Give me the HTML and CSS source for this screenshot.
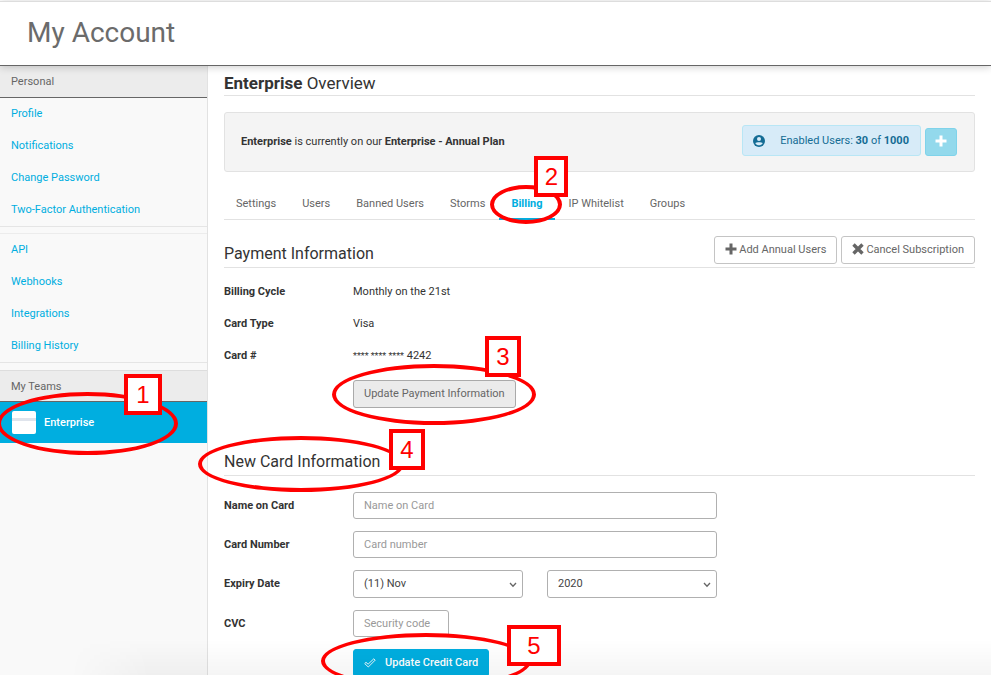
FILE: index.html
```html
<!DOCTYPE html>
<html lang="en">
<head>
<meta charset="utf-8">
<title>My Account</title>
<link rel="stylesheet" href="styles.css">
</head>
<body>
<header class="top"><h1>My Account</h1></header>
<div class="layout">
  <nav class="side" aria-label="Account">
    <h2 class="side-title">Personal</h2>
    <ul class="links">
      <li><a href="#">Profile</a></li>
      <li><a href="#">Notifications</a></li>
      <li><a href="#">Change Password</a></li>
      <li><a href="#">Two-Factor Authentication</a></li>
    </ul>
    <ul class="links">
      <li><a href="#">API</a></li>
      <li><a href="#">Webhooks</a></li>
      <li><a href="#">Integrations</a></li>
      <li><a href="#">Billing History</a></li>
    </ul>
    <h2 class="side-title teams">My Teams</h2>
    <div class="marked">
      <a class="team" href="#"><span class="avatar"></span>Enterprise</a>
      <span class="ring ring-1"></span><span class="tag tag-1">1</span>
    </div>
  </nav>
  <main class="main">
    <h2 class="heading overview"><span><b>Enterprise</b> Overview</span></h2>
    <section class="plan">
      <p><b>Enterprise</b> is currently on our <b>Enterprise - Annual Plan</b></p>
      <div class="seats">
        <span class="enabled">
          <svg width="12" height="12" viewBox="0 0 12 12"><circle cx="6" cy="6" r="6" fill="#146c94"/><circle cx="6" cy="4" r="2" fill="#d7ebf8"/><path d="M2.3 8.2C3.2 6.8 8.8 6.8 9.7 8.2C8.8 9.7 7.4 10.3 6 10.3S3.2 9.7 2.3 8.2Z" fill="#d7ebf8"/></svg>
          <span>Enabled Users: <b>30</b> of <b>1000</b></span>
        </span>
        <button class="plus" type="button" aria-label="Add users"><svg width="12" height="12" viewBox="0 0 12 12"><path d="M6 0.5V11.5M0.5 6H11.5" stroke="#fff" stroke-width="3"/></svg></button>
      </div>
    </section>
    <nav class="tabs" aria-label="Team">
      <a href="#">Settings</a>
      <a href="#">Users</a>
      <a href="#">Banned Users</a>
      <a href="#">Storms</a>
      <div class="marked"><a class="active" href="#">Billing</a><span class="ring ring-2"></span><span class="tag tag-2">2</span></div>
      <a href="#">IP Whitelist</a>
      <a href="#">Groups</a>
    </nav>
    <div class="heading payment">
      <h2>Payment Information</h2>
      <div class="actions">
        <button class="btn" type="button"><svg width="12" height="12" viewBox="0 0 12 12"><path d="M6 0.5V11.5M0.5 6H11.5" stroke="#666" stroke-width="3"/></svg>Add Annual Users</button>
        <button class="btn" type="button"><svg width="12" height="12" viewBox="0 0 12 12"><path d="M1.5 1.5L10.5 10.5M10.5 1.5L1.5 10.5" stroke="#666" stroke-width="3.4"/></svg>Cancel Subscription</button>
      </div>
    </div>
    <dl class="facts">
      <dt>Billing Cycle</dt><dd>Monthly on the 21st</dd>
      <dt>Card Type</dt><dd>Visa</dd>
      <dt>Card #</dt><dd><span class="stars">**** **** ****</span> 4242</dd>
    </dl>
    <div class="marked offset update">
      <button class="btn gray" type="button">Update Payment Information</button>
      <span class="ring ring-3"></span><span class="tag tag-3">3</span>
    </div>
    <div class="marked">
      <h2 class="heading newcard">New Card Information</h2>
      <span class="ring ring-4"></span><span class="tag tag-4">4</span>
    </div>
    <form class="form">
      <div class="row"><label for="name">Name on Card</label><input id="name" type="text" placeholder="Name on Card"></div>
      <div class="row"><label for="number">Card Number</label><input id="number" type="text" placeholder="Card number"></div>
      <div class="row"><label for="month">Expiry Date</label>
        <div class="expiry">
          <div class="pick"><select id="month"><option>(11) Nov</option></select><svg width="8" height="6" viewBox="0 0 8 6"><path d="M1 1L4 4.3L7 1" fill="none" stroke="#666" stroke-width="1.3"/></svg></div>
          <div class="pick"><select aria-label="Expiry year"><option>2020</option></select><svg width="8" height="6" viewBox="0 0 8 6"><path d="M1 1L4 4.3L7 1" fill="none" stroke="#666" stroke-width="1.3"/></svg></div>
        </div>
      </div>
      <div class="row"><label for="cvc">CVC</label><input class="short" id="cvc" type="text" placeholder="Security code"></div>
      <div class="marked offset">
        <button class="btn blue" type="button"><svg width="12" height="10" viewBox="0 0 12 10"><path d="M0.7 5.6L2 4.3L4.1 6.2L9.8 0.8L11.2 2.1L4.3 9Z" fill="none" stroke="#fff" stroke-width="0.9"/></svg>Update Credit Card</button>
        <span class="ring ring-5"></span><span class="tag tag-5">5</span>
      </div>
    </form>
  </main>
</div>
<div class="fade"></div>
</body>
</html>
```

FILE: styles.css
```css
* { box-sizing: border-box; }
body {
  margin: 0;
  height: 100vh;
  overflow: hidden;
  position: relative;
  display: flex;
  flex-direction: column;
  font: 11px/16px Roboto, "Liberation Sans", sans-serif;
  color: #333;
  background: #fff;
}
h1, h2, p, ul, dl, dd { margin: 0; padding: 0; font-weight: 400; }
ul { list-style: none; }
a { color: #00aee0; text-decoration: none; }
button, input, select { font: inherit; }
svg { display: block; flex: none; }

.top {
  position: relative;
  z-index: 1;
  flex: none;
  margin-top: 1px;
  height: 65px;
  padding: 15px 27px;
  border-top: 1px solid #ddd;
  border-bottom: 1px solid #666;
  background: #fff;
  box-shadow: 0 1px 8px rgba(0, 0, 0, 0.2);
}
.top h1 { font-size: 28px; line-height: 32px; color: #6b6b6b; }

.layout { display: flex; align-items: stretch; flex: 1; min-height: 0; overflow: hidden; }
.side { flex: none; width: 208px; border-right: 1px solid #e2e2e2; background: #f9f9f9; }
.side-title {
  height: 32px;
  padding: 8px 11px;
  border-bottom: 1px solid #666;
  background: #ececec;
  font-size: 11px;
  color: #666;
}
.links { border-bottom: 1px solid #e5e5e5; }
.links + .links { margin-top: 6px; border-top: 1px solid #ececec; }
.links a { display: block; padding: 8px 11px; }
.teams { margin-top: 7px; border-top: 1px solid #ddd; }
.team {
  display: flex;
  align-items: center;
  gap: 8px;
  height: 41px;
  padding-left: 12px;
  background: #00aee0;
  color: #fff;
  font-weight: 500;
}
.avatar {
  width: 24px;
  height: 23px;
  border-radius: 2px;
  background: linear-gradient(#fff 7px, #dfe4ec 7px, #dfe4ec 10px, #fff 10px);
}

.main { flex: 1; min-width: 0; padding: 0 16px; }
.heading, .heading h2 { font-size: 16px; line-height: 20px; }
.heading { border-bottom: 1px solid #e2e2e2; }
.overview { height: 30px; padding-top: 7px; font-size: 17px; }
.plan {
  display: flex;
  justify-content: space-between;
  height: 60px;
  margin-top: 16px;
  padding: 12px 17px 12px 16px;
  border: 1px solid #e2e2e2;
  border-radius: 3px;
  background: #f4f4f4;
}
.plan p { padding-top: 9px; }
.seats { display: flex; align-items: flex-start; gap: 4px; }
.enabled {
  display: flex;
  align-items: center;
  gap: 15px;
  height: 31px;
  padding: 0 11px 0 10px;
  border: 1px solid #b8e6f5;
  border-radius: 3px;
  background: #d7ebf8;
  color: #146c94;
}
.plus {
  display: grid;
  place-items: center;
  width: 32px;
  height: 28px;
  margin-top: 3px;
  padding: 0 0 3px;
  border: 1px solid #7fd3ea;
  border-radius: 3px;
  background: #93d9ec;
}
.tabs { display: flex; gap: 2px; height: 48px; border-bottom: 1px solid #e2e2e2; }
.tabs a { display: block; height: 48px; padding: 24px 12px 0; color: #666; }
.tabs .active { border-bottom: 2px solid #00aee0; color: #00aee0; font-weight: 700; }

.payment { display: flex; justify-content: space-between; height: 48px; padding-top: 16px; }
.payment h2 { padding-top: 8px; }
.actions { display: flex; gap: 4px; }
.btn {
  display: inline-flex;
  align-items: center;
  gap: 2px;
  height: 28px;
  padding: 0 10px;
  border: 1px solid #c4c4c4;
  border-radius: 3px;
  background: #fff;
  color: #666;
  font-size: 11px;
}
.actions svg { margin-bottom: 2px; }
.gray { border-color: #aaa; background: #ebebeb; }
.blue { gap: 9px; border-color: #00aee0; background: #00aee0; color: #fff; font-weight: 500; }
.facts { display: grid; grid-template-columns: 129px 1fr; padding-top: 8px; }
.facts dt, .facts dd { padding: 8px 0; }
.facts dt, .row label { font-weight: 700; }
.stars { font-size: 9px; }
.offset { margin-left: 129px; }
.update { margin-top: 8px; height: 28px; }
.newcard { margin-top: 44px; height: 24px; }
.form { display: grid; gap: 12px; padding-top: 16px; }
.row { display: grid; grid-template-columns: 129px 364px; align-items: center; min-height: 27px; }
.row input, .row select {
  width: 100%;
  height: 27px;
  padding: 0 10px;
  border: 1px solid #b0b0b0;
  border-radius: 3px;
  background: #fff;
  color: #444;
}
.row input::placeholder { color: #999; }
.row .short { width: 96px; }
.expiry { display: grid; grid-template-columns: 1fr 1fr; gap: 24px; }
.pick { position: relative; }
.row select { display: block; height: 28px; appearance: none; }
.pick svg { position: absolute; right: 6px; top: 12px; pointer-events: none; }

.fade {
  position: absolute;
  inset: auto 0 0 0;
  height: 36px;
  background: linear-gradient(rgba(0, 0, 0, 0), rgba(0, 0, 0, 0.04));
  mask-image: linear-gradient(90deg, transparent 70px, #000 150px);
  pointer-events: none;
}

/* Numbered callouts over the steps */
.marked { position: relative; }
.ring, .tag { position: absolute; pointer-events: none; border: 4px solid #f00; }
.ring { z-index: 2; border-radius: 50%; }
.tag {
  z-index: 3;
  display: grid;
  place-items: center;
  width: 36px;
  height: 41px;
  background: #fff;
  color: #f00;
  font: 24px/32px "Liberation Sans", sans-serif;
}
.ring-1 { left: -3px; top: -10px; width: 181px; height: 63px; }
.tag-1 { left: 124px; top: -28px; width: 38px; }
.ring-2 { left: -9px; top: 13px; width: 72px; height: 39px; }
.tag-2 { left: 35px; top: -16px; width: 34px; }
.ring-3 { left: -21px; top: -16px; width: 204px; height: 61px; }
.tag-3 { left: 132px; top: -44px; }
.ring-4 { left: -26px; top: -16px; width: 206px; height: 56px; }
.tag-4 { left: 165px; top: -23px; }
.ring-5 { left: -32px; top: -16px; width: 210px; height: 56px; }
.tag-5 { left: 154px; top: -24px; width: 54px; }
```
